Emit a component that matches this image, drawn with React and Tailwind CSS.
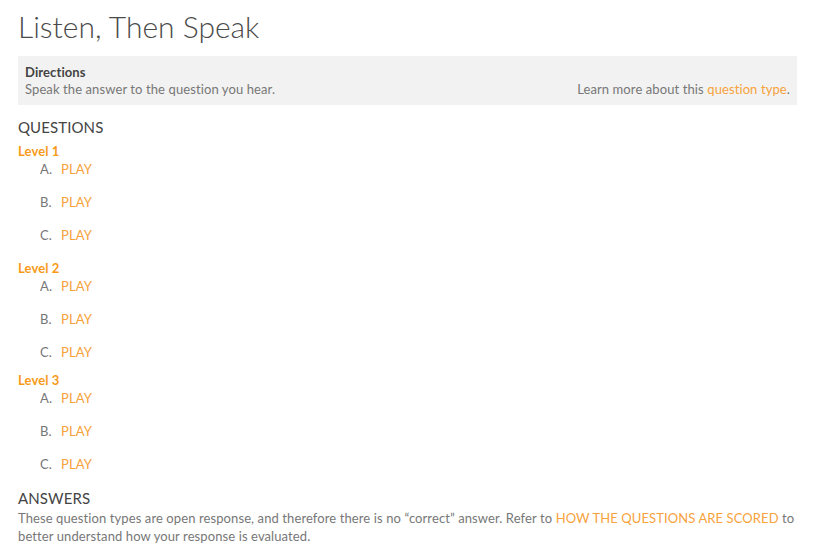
import React from 'react';

const levels = [
    { name: 'Level 1', last: 'pb-[15px]' },
    { name: 'Level 2', last: 'pb-[10px]' },
    { name: 'Level 3', last: 'pb-[15px]' },
];
const items = ['A.', 'B.', 'C.'];

const App = () => {
    return (
        <div className="bg-white min-h-screen px-[18px] text-[13px] tracking-[0.1px] text-[#777]" style={{ fontFamily: 'Lato, "Open Sans", sans-serif' }}>
            <h1 className="text-[30px] leading-[36px] pt-[8px] text-[#4a4a4a] font-light tracking-normal">Listen, Then Speak</h1>

            <div className="mt-[12px] w-[779px] bg-[#f2f2f2] px-[7px] pt-[8px] pb-[7px]">
                <div className="font-bold text-[#444] leading-[17px]">Directions</div>
                <div className="flex justify-between leading-[17px]">
                    <span>Speak the answer to the question you hear.</span>
                    <span>
                        Learn more about this <a className="text-[#f7a23b]">question type</a>.
                    </span>
                </div>
            </div>

            <h2 className="mt-[13px] text-[15px] leading-[18px] text-[#444] uppercase">Questions</h2>

            <div className="mt-[6px]">
                {levels.map((level) => (
                    <div key={level.name}>
                        <div className="font-bold text-[#f79a1a] leading-[18px]">{level.name}</div>
                        <ul className="pl-[22px]">
                            {items.map((item, i) => (
                                <li key={item} className={`flex leading-[18px] ${i < 2 ? 'pb-[15px]' : level.last}`}>
                                    <span className="w-[21px]">{item}</span>
                                    <a className="text-[#f7a23b]">PLAY</a>
                                </li>
                            ))}
                        </ul>
                    </div>
                ))}
            </div>

            <h2 className="mt-[1px] text-[15px] leading-[18px] text-[#444] uppercase">Answers</h2>
            <p className="leading-[18px] mt-[2px]">
                These question types are open response, and therefore there is no “correct” answer. Refer to{' '}
                <a className="text-[#f7a23b]">HOW THE QUESTIONS ARE SCORED</a> to better understand how your response is evaluated.
            </p>
        </div>
    );
};

export default App;
